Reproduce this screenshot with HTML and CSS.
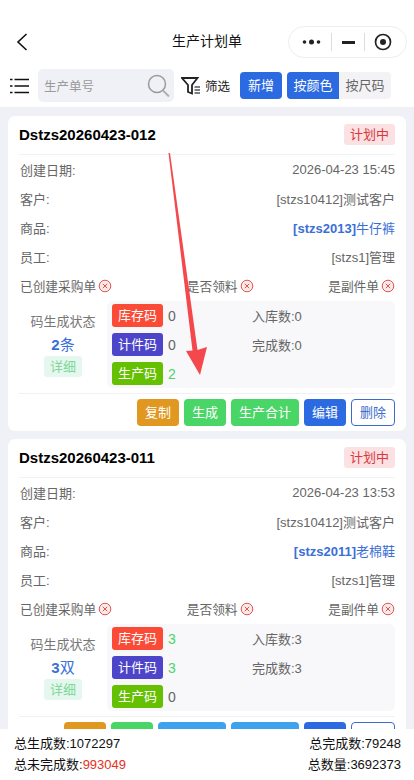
FILE: index.html
```html
<!DOCTYPE html>
<html lang="zh-CN">
<head>
  <meta charset="UTF-8" />
  <meta name="viewport" content="width=device-width, initial-scale=1.0"/>
  <title>生产计划单</title>
  <link rel="stylesheet" href="styles.css">
</head>
<body>
  <div class="page">
    <header class="nav">
      <svg class="back" width="12" height="20" viewBox="0 0 12 20"><path d="M10.5 2 2 10l8.500 8" fill="none" stroke="#111" stroke-width="1.600"/></svg>
      <div class="nav-title">生产计划单</div>
      <div class="capsule">
        <svg width="20" height="6" viewBox="0 0 20 6"><circle cx="2.500" cy="3" r="1.800" fill="#222"/><circle cx="9.500" cy="3" r="2.500" fill="#222"/><circle cx="16.500" cy="3" r="1.800" fill="#222"/></svg>
        <i class="capsule-sep"></i>
        <i class="capsule-min"></i>
        <i class="capsule-sep"></i>
        <svg width="18" height="18" viewBox="0 0 18 18"><circle cx="9" cy="9" r="7.500" fill="none" stroke="#222" stroke-width="1.700"/><circle cx="9" cy="9" r="3" fill="#222"/></svg>
      </div>
    </header>

    <div class="toolbar">
      <svg class="menu" width="19" height="16" viewBox="0 0 19 16"><path d="M4.500 1.500H19M4.500 8H19M4.500 14.500H19" stroke="#111" stroke-width="1.600"/><path d="M0 1.500h2.500M0 8h2.500M0 14.500h2.500" stroke="#111" stroke-width="1.600"/></svg>
      <div class="search">
        <span class="search-text">生产单号</span>
        <svg width="23" height="23" viewBox="0 0 23 23"><circle cx="10" cy="10" r="8.500" fill="none" stroke="#9a9a9a" stroke-width="1.500"/><path d="M16 16.500 22 22.500" stroke="#b0b0b0" stroke-width="2"/></svg>
      </div>
      <div class="filter">
        <svg width="20" height="18" viewBox="0 0 20 18"><path d="M1 1h15.500l-5.500 7v8.500l-4-1.500V8z" fill="none" stroke="#222" stroke-width="1.800"/><path d="M13.500 10H19M13.500 13H19M13.500 16H19" stroke="#555" stroke-width="1.500"/></svg>
        <span>筛选</span>
      </div>
      <button class="btn blue">新增</button>
      <div class="segment">
        <span class="seg on">按颜色</span>
        <span class="seg">按尺码</span>
      </div>
    </div>

    <main class="list">
      <section class="card">
        <div class="card-head">
          <b class="order-no">Dstzs20260423-012</b>
          <span class="state">计划中</span>
        </div>
        <div class="row"><span>创建日期:</span><span>2026-04-23 15:45</span></div>
        <div class="row"><span>客户:</span><span>[stzs10412]测试客户</span></div>
        <div class="row"><span>商品:</span><span class="goods"><b>[stzs2013]</b>牛仔裤</span></div>
        <div class="row"><span>员工:</span><span>[stzs1]管理</span></div>
        <div class="row flags">
          <span class="flag">已创建采购单<svg class="no" viewBox="0 0 14 14"><circle cx="7" cy="7" r="5.800"/><path d="M4.800 4.800l4.400 4.400M9.200 4.800l-4.400 4.400"/></svg></span>
          <span class="flag">是否领料<svg class="no" viewBox="0 0 14 14"><circle cx="7" cy="7" r="5.800"/><path d="M4.800 4.800l4.400 4.400M9.200 4.800l-4.400 4.400"/></svg></span>
          <span class="flag">是副件单<svg class="no" viewBox="0 0 14 14"><circle cx="7" cy="7" r="5.800"/><path d="M4.800 4.800l4.400 4.400M9.200 4.800l-4.400 4.400"/></svg></span>
        </div>
        <div class="codes">
          <div class="code-state">
            <span>码生成状态</span>
            <span class="amount"><b>2</b>条</span>
            <span class="detail">详细</span>
          </div>
          <div class="code-panel">
            <div class="code-row"><span class="tag red">库存码</span><span class="num">0</span><span class="stat">入库数:0</span></div>
            <div class="code-row"><span class="tag indigo">计件码</span><span class="num">0</span><span class="stat">完成数:0</span></div>
            <div class="code-row"><span class="tag lime">生产码</span><span class="num ok">2</span></div>
          </div>
        </div>
        <div class="actions">
          <button class="btn orange">复制</button>
          <button class="btn green">生成</button>
          <button class="btn green wide">生产合计</button>
          <button class="btn blue">编辑</button>
          <button class="btn outline">删除</button>
        </div>
      </section>

      <section class="card">
        <div class="card-head">
          <b class="order-no">Dstzs20260423-011</b>
          <span class="state">计划中</span>
        </div>
        <div class="row"><span>创建日期:</span><span>2026-04-23 13:53</span></div>
        <div class="row"><span>客户:</span><span>[stzs10412]测试客户</span></div>
        <div class="row"><span>商品:</span><span class="goods"><b>[stzs2011]</b>老棉鞋</span></div>
        <div class="row"><span>员工:</span><span>[stzs1]管理</span></div>
        <div class="row flags">
          <span class="flag">已创建采购单<svg class="no" viewBox="0 0 14 14"><circle cx="7" cy="7" r="5.800"/><path d="M4.800 4.800l4.400 4.400M9.200 4.800l-4.400 4.400"/></svg></span>
          <span class="flag">是否领料<svg class="no" viewBox="0 0 14 14"><circle cx="7" cy="7" r="5.800"/><path d="M4.800 4.800l4.400 4.400M9.200 4.800l-4.400 4.400"/></svg></span>
          <span class="flag">是副件单<svg class="no" viewBox="0 0 14 14"><circle cx="7" cy="7" r="5.800"/><path d="M4.800 4.800l4.400 4.400M9.200 4.800l-4.400 4.400"/></svg></span>
        </div>
        <div class="codes">
          <div class="code-state">
            <span>码生成状态</span>
            <span class="amount"><b>3</b>双</span>
            <span class="detail">详细</span>
          </div>
          <div class="code-panel">
            <div class="code-row"><span class="tag red">库存码</span><span class="num ok">3</span><span class="stat">入库数:3</span></div>
            <div class="code-row"><span class="tag indigo">计件码</span><span class="num ok">3</span><span class="stat">完成数:3</span></div>
            <div class="code-row"><span class="tag lime">生产码</span><span class="num">0</span></div>
          </div>
        </div>
        <div class="actions">
          <button class="btn orange"></button>
          <button class="btn green"></button>
          <button class="btn sky wide"></button>
          <button class="btn sky wide"></button>
          <button class="btn blue"></button>
          <button class="btn outline"></button>
        </div>
      </section>
    </main>

    <footer class="totals">
      <div class="total-row"><span>总生成数:1072297</span><span>总完成数:79248</span></div>
      <div class="total-row"><span>总未完成数:<em>993049</em></span><span>总数量:3692373</span></div>
    </footer>

    <!-- red annotation arrow drawn over the screenshot -->
    <svg class="arrow" width="414" height="780" viewBox="0 0 414 780"><path d="M168.500 153 170 153 197.500 350 207 347 200 375 186 351 192.500 350.500z" fill="#f4484c"/></svg>
  </div>
</body>
</html>
```

FILE: styles.css
```css
* { box-sizing: border-box; }
body {
  margin: 0; background: #fff; color: #666;
  font-family: "Liberation Sans", "Noto Sans CJK SC", sans-serif; font-size: 13px;
}
.page {
  position: relative; width: 414px; height: 780px; overflow: hidden;
  display: flex; flex-direction: column;
}

.nav {
  height: 64px; flex: none; display: flex; align-items: center;
  padding: 22px 7px 2px 16px; position: relative;
}
.nav-title {
  position: absolute; left: 172px; top: 32px;
  font-size: 14px; line-height: 18px; color: #111;
}
.capsule {
  margin-left: auto; width: 119px; height: 32px; display: flex; align-items: center;
  justify-content: space-between; padding: 0 14px 0 13px;
  border: 1px solid #eee; border-radius: 16px;
}
.capsule-sep { width: 1px; height: 18px; background: #ddd; }
.capsule-min { width: 13px; height: 3px; background: #222; }

.toolbar {
  height: 43px; flex: none; display: flex; align-items: center;
  padding: 0 0 0 10px;
}
.menu { flex: none; }
.search {
  width: 136px; height: 33px; margin-left: 9px; padding: 0 4px 0 6px;
  display: flex; align-items: center; justify-content: space-between;
  background: #eff1f6; border-radius: 5px;
}
.search-text { color: #9a9a9a; font-size: 12.500px; }
.filter {
  display: flex; align-items: center; gap: 4px; width: 59px; margin-left: 7px;
  color: #222; font-size: 12.500px;
}
.btn {
  width: 42px; height: 27px; padding: 0; border: none; border-radius: 4px;
  color: #fff; font: inherit; font-size: 13px; line-height: 27px; text-align: center;
}
.wide { width: 68px; }
.blue { background: #2b6ae0; }
.orange { background: #e09820; }
.green { background: #49d667; }
.sky { background: #3ea2ee; }
.outline {
  width: 44px; background: #fff; color: #3b6cc9; border: 1px solid #3b6cc9; line-height: 25px;
}
.segment {
  display: flex; height: 27px; margin-left: 5px; border-radius: 4px; overflow: hidden;
  background: #f3f3f5; line-height: 27px; text-align: center;
}
.seg { width: 52px; color: #666; }
.seg.on { background: #2b6ae0; color: #fff; }

.list {
  flex: 1; min-height: 0; overflow: hidden; padding: 9px 8px 0;
  background: #eff1f7; display: flex; flex-direction: column; gap: 8px;
}
.card {
  flex: none; height: 315px; padding: 0 11px 0 11px; background: #fff; border-radius: 7px;
}
.card-head {
  height: 39px; display: flex; align-items: center; justify-content: space-between;
  border-bottom: 1px solid #f1f1f3; padding: 0 0 2px 0;
}
.order-no { color: #000; font-size: 15px; }
.state {
  width: 51px; height: 21px; line-height: 21px; text-align: center; margin-right: 0;
  background: #fbe1e2; color: #d9363e; border-radius: 3px; font-size: 13px;
}
.row {
  height: 29px; display: flex; align-items: center; justify-content: space-between;
  padding-left: 1px;
}
.goods { color: #3a6fd8; }
.flag { display: flex; align-items: center; gap: 2px; font-size: 12.700px; }
.no { width: 14px; height: 14px; fill: #fbeaea; stroke: #e0564f; stroke-width: 1; }

.codes { display: flex; margin-top: 1px; height: 93px; border-bottom: 1px solid #f1f1f3; }
.code-state {
  width: 88px; display: flex; flex-direction: column; align-items: center;
  padding-top: 10px; color: #777;
}
.amount { color: #3a6fd8; font-size: 15px; margin-top: 6px; line-height: 18px; }
.detail {
  width: 38px; height: 21px; line-height: 21px; text-align: center; margin-top: 2px;
  background: #e6f7ef; color: #7dd99a; border-radius: 3px;
}
.code-panel {
  flex: 1; height: 87px; padding: 3px 5px; background: #f8f8fa; border-radius: 6px;
  display: flex; flex-direction: column; gap: 6px;
}
.code-row { height: 23px; display: flex; align-items: center; }
.tag {
  width: 51px; height: 23px; line-height: 23px; text-align: center;
  color: #fff; border-radius: 3px;
}
.red { background: #fb4a35; }
.indigo { background: #4c45c9; }
.lime { background: #64c000; }
.num { width: 89px; padding-left: 5px; font-size: 14px; color: #666; }
.ok { color: #49d667; }
.stat { color: #666; }

.actions { display: flex; justify-content: flex-end; gap: 5px; padding-top: 5px; }

.totals {
  height: 51px; flex: none; background: #fff; padding: 4px 13px 0 14px; color: #111;
  display: flex; flex-direction: column; font-size: 13px;
}
.total-row { height: 21px; line-height: 21px; display: flex; justify-content: space-between; }
.total-row em { font-style: normal; color: #e5311c; }

.arrow { position: absolute; left: 0; top: 0; pointer-events: none; }
```
